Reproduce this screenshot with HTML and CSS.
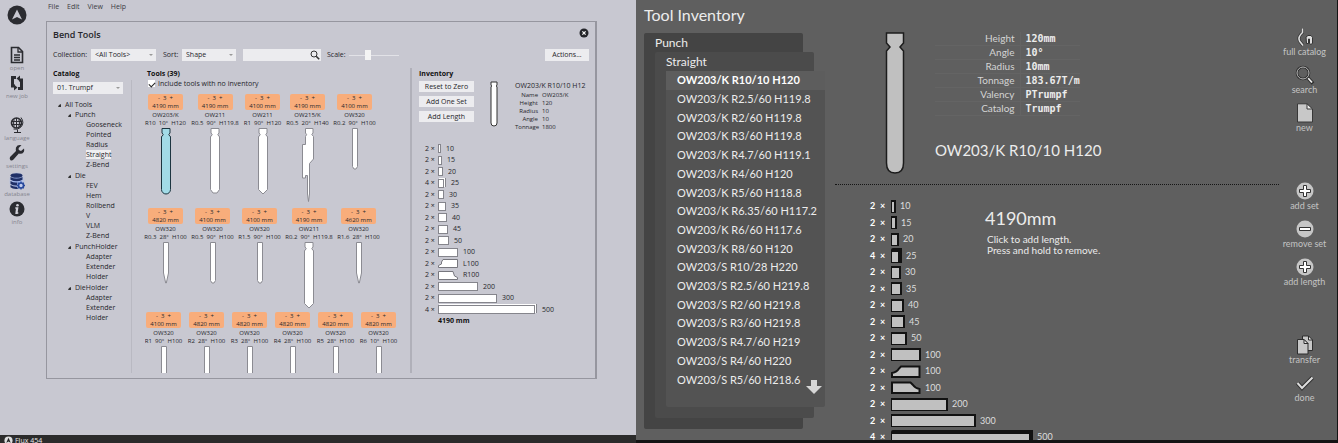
FILE: index.html
```html
<!DOCTYPE html>
<html lang="en">
<head>
<meta charset="utf-8">
<title>Bend Tools</title>
<link rel="stylesheet" href="styles.css">
</head>
<body>
<svg class="defs" aria-hidden="true">
  <symbol id="t-round" viewBox="0 0 10 67"><path d="M1 .5H9V5L7.8 6.5 9 8.5H9.5V61.5A4.5 4.5 0 0 1 .5 61.5V8.5H1L2.2 6.5 1 5Z"/></symbol>
  <symbol id="t-blunt" viewBox="0 0 10 67"><path d="M1 .5H9V5L7.8 6.5 9 8.5H9.5V61.5L7 65H3L.5 61.5V8.5H1L2.2 6.5 1 5Z"/></symbol>
  <symbol id="t-point" viewBox="0 0 10 67"><path d="M1 .5H9V5L7.8 6.5 9 8.5H9.5V61.5L5 66 .5 61.5V8.5H1L2.2 6.5 1 5Z"/></symbol>
  <symbol id="t-step" viewBox="0 0 12 74"><path d="M3.500 .5H11V5L9.800 6.500 11.500 8.500V31L7.500 35.500V66L6.500 73.500 5.500 66V47.500H3.500V50H.5V16.500H3.500V8.500L4.600 6.500 3.500 5Z"/></symbol>
  <symbol id="t-slim" viewBox="0 0 6 42"><path d="M.5 .5H5.500V38.500L4 41H2L.5 38.500Z"/></symbol>
  <symbol id="t-spike" viewBox="0 0 6 42"><path d="M.5 .5H5.500V31L3.300 41H2.700L.5 31Z"/></symbol>
  <symbol id="i-plus" viewBox="0 0 18 18"><circle cx="9" cy="9" r="8.500" fill="#c6c6c6"/><path d="M7.500 3.500h3v4h4v3h-4v4h-3v-4h-4v-3h4z" fill="#fff" stroke="#333"/></symbol>
</svg>
<div class="screens">
<section class="desk">
  <div class="desk-body">
    <nav class="side">
      <svg class="logo" viewBox="0 0 20 20"><circle cx="10" cy="10" r="9.500" fill="#2b2c31"/><path d="M10 4.500 15 14.500 10 12 5 14.500Z" fill="#c8c8d1"/></svg>
      <div class="side-group">
        <button class="side-btn"><svg viewBox="0 0 16 18"><path d="M2.500 1.500h7l4 4v11h-11z" fill="none" stroke="#2b2c31" stroke-width="1.600"/><path d="M9 1.500v4.500h4.500M5 9h6M5 11.500h6M5 14h6" fill="none" stroke="#2b2c31" stroke-width="1.300"/></svg>open</button>
        <button class="side-btn"><svg viewBox="0 0 16 18"><path d="M7 3.500H3.500V12H6" fill="none" stroke="#2b2c31" stroke-width="3"/><path d="M9 14.500H12.500V6H10" fill="none" stroke="#2b2c31" stroke-width="3"/><path d="M5 10.500 8.500 13.500 5 16.500ZM11 1.500 7.500 4.500 11 7.500Z" fill="#2b2c31"/></svg>new job</button>
      </div>
      <div class="side-group">
        <button class="side-btn"><svg viewBox="0 0 16 18"><circle cx="7.500" cy="7" r="5" fill="none" stroke="#2b2c31" stroke-width="1.600"/><path d="M3 5.500h9M3 8.500h9M7.500 2v10M5.200 3.500q-1.400 3.500 0 7M9.800 3.500q1.400 3.500 0 7M12 1.500q4 5.500-.5 10-3 2.500-7 1.500M8.500 13.500v3M5 16.500h7" fill="none" stroke="#2b2c31"/></svg>language</button>
        <button class="side-btn"><svg viewBox="0 0 16 18"><path d="M15 4.500 12 7 9.800 6 9.600 4 12.500 1.300Q8.500 .3 7 3.500 6.500 5.500 7 7L1 13Q.2 15 1.500 16.200 3 17 4.500 15.500L9.800 9.600Q13 10.500 14.800 8 15.600 6.300 15 4.500Z" fill="#2b2c31"/></svg>settings</button>
        <button class="side-btn current"><svg viewBox="0 0 16 18"><ellipse cx="7.500" cy="3.500" rx="6" ry="2.300"/><path d="M1.500 5q6 3 12 0v2.800q-6 3-12 0zM1.500 9q3.500 2 7 1.400L8 13.500q-4 .2-6.500-1.500zM1.500 13q3 2 6.500 1.700l1 2.200q-5 .6-7.500-1.600z"/><circle cx="12" cy="13.500" r="2.500" fill="#c0cbed" stroke="#28499c" stroke-width="1.600"/><path d="M12 9.500v1.500M12 16v1.500M8 13.500h1.500M14.500 13.500H16M9.200 10.700l1 1M13.800 15.300l1 1M9.200 16.300l1-1M13.800 11.700l1-1" stroke="#28499c" stroke-width="1.300"/></svg>database</button>
        <button class="side-btn"><svg viewBox="0 0 16 18"><circle cx="8" cy="9" r="7.500" fill="#2b2c31"/><circle cx="8.500" cy="5.200" r="1.300" fill="#d0d0d8"/><path d="M6.300 8h2.400l-.8 5h1.400M7.600 8.500 7 13.300h1.500" fill="none" stroke="#d0d0d8" stroke-width="1.300"/></svg>info</button>
      </div>
    </nav>
    <div class="work">
      <nav class="menu"><a href="#">File</a><a href="#">Edit</a><a href="#">View</a><a href="#">Help</a></nav>
      <main class="window">
        <header class="win-head"><h1>Bend Tools</h1>
          <button class="close" aria-label="Close"><svg viewBox="0 0 10 10"><circle cx="5" cy="5" r="4.500" fill="#25262b"/><path d="M3.400 3.400l3.200 3.200M6.600 3.400 3.400 6.600" stroke="#fff" stroke-width="1.200"/></svg></button></header>
        <div class="toolbar">
          <label for="coll" class="coll-label">Collection:</label><span class="pick pick-coll"><select id="coll"><option>&lt;All Tools&gt;</option></select></span>
          <label for="sort" class="sort-label">Sort:</label><span class="pick pick-sort"><select id="sort"><option>Shape</option></select></span>
          <span class="search"><input type="text" aria-label="Search tools"><svg viewBox="0 0 10 10"><circle cx="4" cy="4" r="3" fill="none" stroke="#333"/><path d="M6.200 6.200 9.200 9.200" stroke="#333" stroke-width="1.600"/></svg></span>
          <label for="scale">Scale:</label><input id="scale" class="scale" type="range" min="0" max="100" value="38">
          <button class="btn actions">Actions...</button>
        </div>
        <div class="cols">
          <section class="catalog">
            <h2>Catalog</h2>
            <div class="catalog-body">
            <span class="pick pick-cat"><select aria-label="Catalog"><option>01. Trumpf</option></select></span>
            <div class="tree">
              <p class="node top">All Tools</p>
              <div class="branch"><p class="node">Punch</p><p>Gooseneck</p><p>Pointed</p><p>Radius</p><p><mark>Straight</mark></p><p>Z-Bend</p></div>
              <div class="branch"><p class="node">Die</p><p>FEV</p><p>Hem</p><p>Rollbend</p><p>V</p><p>VLM</p><p>Z-Bend</p></div>
              <div class="branch"><p class="node">PunchHolder</p><p>Adapter</p><p>Extender</p><p>Holder</p></div>
              <div class="branch"><p class="node">DieHolder</p><p>Adapter</p><p>Extender</p><p>Holder</p></div>
            </div>
            </div>
          </section>
          <section class="tools">
            <h2>Tools (39)</h2>
            <label class="check"><input type="checkbox" checked>Include tools with no inventory</label>
            <div class="shelf">
              <article class="tool m"><div class="badge">- &nbsp;3 &nbsp;+<br>4190 mm</div><p>OW203/K<br>R10 &nbsp;10° &nbsp;H120</p><svg class="big picked"><use href="#t-round"/></svg></article>
              <article class="tool l"><div class="badge">- &nbsp;3 &nbsp;+<br>4190 mm</div><p>OW211<br>R0.5 &nbsp;90° &nbsp;H119.8</p><svg class="big"><use href="#t-blunt"/></svg></article>
              <article class="tool s"><div class="badge">- &nbsp;3 &nbsp;+<br>4100 mm</div><p>OW211<br>R1 &nbsp;90° &nbsp;H120</p><svg class="big"><use href="#t-point"/></svg></article>
              <article class="tool m"><div class="badge">- &nbsp;3 &nbsp;+<br>4190 mm</div><p>OW215/K<br>R0.5 &nbsp;20° &nbsp;H140</p><svg class="step"><use href="#t-step"/></svg></article>
              <article class="tool m"><div class="badge">- &nbsp;3 &nbsp;+<br>4100 mm</div><p>OW320<br>R0.2 &nbsp;90° &nbsp;H100</p><svg class="slim"><use href="#t-slim"/></svg></article>
            </div>
            <div class="shelf">
              <article class="tool m"><div class="badge">- &nbsp;3 &nbsp;+<br>4820 mm</div><p>OW320<br>R0.3 &nbsp;28° &nbsp;H100</p><svg class="slim"><use href="#t-spike"/></svg></article>
              <article class="tool m"><div class="badge">- &nbsp;3 &nbsp;+<br>4100 mm</div><p>OW320<br>R0.5 &nbsp;90° &nbsp;H100</p><svg class="slim"><use href="#t-slim"/></svg></article>
              <article class="tool m"><div class="badge">- &nbsp;3 &nbsp;+<br>4100 mm</div><p>OW320<br>R1.5 &nbsp;90° &nbsp;H100</p><svg class="slim"><use href="#t-slim"/></svg></article>
              <article class="tool l"><div class="badge">- &nbsp;3 &nbsp;+<br>4190 mm</div><p>OW211<br>R0.2 &nbsp;90° &nbsp;H119.8</p><svg class="big"><use href="#t-point"/></svg></article>
              <article class="tool m"><div class="badge">- &nbsp;3 &nbsp;+<br>4620 mm</div><p>OW320<br>R1.6 &nbsp;28° &nbsp;H100</p><svg class="slim"><use href="#t-spike"/></svg></article>
            </div>
            <div class="shelf last">
              <article class="tool s"><div class="badge">- &nbsp;3 &nbsp;+<br>4100 mm</div><p>OW320<br>R1 &nbsp;90° &nbsp;H100</p><svg class="slim"><use href="#t-slim"/></svg></article>
              <article class="tool s"><div class="badge">- &nbsp;3 &nbsp;+<br>4820 mm</div><p>OW320<br>R2 &nbsp;28° &nbsp;H100</p><svg class="slim"><use href="#t-slim"/></svg></article>
              <article class="tool s"><div class="badge">- &nbsp;3 &nbsp;+<br>4820 mm</div><p>OW320<br>R3 &nbsp;28° &nbsp;H100</p><svg class="slim"><use href="#t-slim"/></svg></article>
              <article class="tool s"><div class="badge">- &nbsp;3 &nbsp;+<br>4820 mm</div><p>OW320<br>R4 &nbsp;28° &nbsp;H100</p><svg class="slim"><use href="#t-slim"/></svg></article>
              <article class="tool s"><div class="badge">- &nbsp;3 &nbsp;+<br>4820 mm</div><p>OW320<br>R5 &nbsp;28° &nbsp;H100</p><svg class="slim"><use href="#t-slim"/></svg></article>
              <article class="tool s"><div class="badge">- &nbsp;3 &nbsp;+<br>4820 mm</div><p>OW320<br>R6 &nbsp;10° &nbsp;H100</p><svg class="slim"><use href="#t-slim"/></svg></article>
            </div>
          </section>
          <section class="inventory">
            <h2>Inventory</h2>
            <div class="inv-top">
              <div class="inv-btns"><button class="btn">Reset to Zero</button><button class="btn">Add One Set</button><button class="btn">Add Length</button></div>
              <svg class="inv-tool" viewBox="0 0 8 46"><path d="M1 1H7V4L6.300 5 7 6V42A3 3 0 0 1 1 42V6L1.700 5 1 4Z" fill="#fff" stroke="#333"/></svg>
              <div class="inv-info"><h3>OW203/K R10/10 H12</h3>
                <dl><dt>Name</dt><dd>OW203/K</dd><dt>Height</dt><dd>120</dd><dt>Radius</dt><dd>10</dd><dt>Angle</dt><dd>10</dd><dt>Tonnage</dt><dd>1800</dd></dl></div>
            </div>
            <ul class="stock">
              <li><span>2 ×</span><i style="width:3px"></i>10</li>
              <li><span>2 ×</span><i style="width:4px"></i>15</li>
              <li><span>2 ×</span><i style="width:5px"></i>20</li>
              <li><span>4 ×</span><i class="multi" style="width:6px"></i>25</li>
              <li><span>2 ×</span><i style="width:6px"></i>30</li>
              <li><span>2 ×</span><i style="width:8px"></i>35</li>
              <li><span>2 ×</span><i style="width:9px"></i>40</li>
              <li><span>2 ×</span><i style="width:10px"></i>45</li>
              <li><span>2 ×</span><i style="width:11px"></i>50</li>
              <li><span>2 ×</span><i style="width:20px"></i>100</li>
              <li><span>2 ×</span><svg viewBox="0 0 20 9"><path d="M.5 8.500V6.500L3.500 5V3L5 .5H19.500V8.500Z"/></svg>L100</li>
              <li><span>2 ×</span><svg viewBox="0 0 20 9"><path d="M.5 .5H15L16.500 5 19.500 6.500V8.500H.5Z"/></svg>R100</li>
              <li><span>2 ×</span><i style="width:40px"></i>200</li>
              <li><span>2 ×</span><i style="width:59px"></i>300</li>
              <li><span>4 ×</span><i class="multi" style="width:97px"></i>500</li>
            </ul>
            <strong class="total">4190 mm</strong>
          </section>
        </div>
      </main>
    </div>
  </div>
  <footer class="status"><svg viewBox="0 0 10 10"><circle cx="5" cy="5" r="4.500" fill="#ddd"/><path d="M5 2 7.500 7.500 5 6 2.500 7.500Z" fill="#222"/></svg><span>Flux 454</span></footer>
</section>

<section class="panel">
  <div class="browse">
    <h1>Tool Inventory</h1>
    <div class="card c1"><h2>Punch</h2>
      <div class="card c2"><h2>Straight</h2>
        <div class="card c3">
          <ul class="names">
            <li class="on">OW203/K R10/10 H120</li><li>OW203/K R2.5/60 H119.8</li><li>OW203/K R2/60 H119.8</li><li>OW203/K R3/60 H119.8</li><li>OW203/K R4.7/60 H119.1</li><li>OW203/K R4/60 H120</li><li>OW203/K R5/60 H118.8</li><li>OW203/K R6.35/60 H117.2</li><li>OW203/K R6/60 H117.6</li><li>OW203/K R8/60 H120</li><li>OW203/S R10/28 H220</li><li>OW203/S R2.5/60 H219.8</li><li>OW203/S R2/60 H219.8</li><li>OW203/S R3/60 H219.8</li><li>OW203/S R4.7/60 H219</li><li>OW203/S R4/60 H220</li><li>OW203/S R5/60 H218.6</li>
          </ul>
          <button class="more" aria-label="Scroll down"><svg viewBox="0 0 16 14"><path d="M5 0h6v6h5L8 14 0 6h5z" fill="#d6d6d6"/></svg></button>
        </div>
      </div>
    </div>
  </div>
  <div class="detail">
    <div class="spec">
      <svg class="profile" viewBox="0 0 20 142"><path d="M1.500 1H18.500V11L15 15 18.500 19V131Q18.500 141 10 141T1.500 131V19L5 15 1.500 11Z" fill="#c0c0c0" stroke="#1c1c1c" stroke-width="1.500"/></svg>
      <div>
        <table class="facts">
          <tr><th>Height</th><td>120mm</td></tr><tr><th>Angle</th><td>10°</td></tr><tr><th>Radius</th><td>10mm</td></tr><tr><th>Tonnage</th><td>183.67T/m</td></tr><tr><th>Valency</th><td>PTrumpf</td></tr><tr><th>Catalog</th><td>Trumpf</td></tr>
        </table>
        <h2>OW203/K R10/10 H120</h2>
      </div>
    </div>
    <div class="lengths">
      <ul class="bars">
        <li><b>2</b><b>×</b><i style="width:5px"></i>10</li>
        <li><b>2</b><b>×</b><i style="width:6px"></i>15</li>
        <li><b>2</b><b>×</b><i style="width:8px"></i>20</li>
        <li><b>4</b><b>×</b><i class="multi" style="width:11px"></i>25</li>
        <li><b>2</b><b>×</b><i style="width:10px"></i>30</li>
        <li><b>2</b><b>×</b><i style="width:11px"></i>35</li>
        <li><b>2</b><b>×</b><i style="width:13px"></i>40</li>
        <li><b>2</b><b>×</b><i style="width:14px"></i>45</li>
        <li><b>2</b><b>×</b><i style="width:16px"></i>50</li>
        <li><b>2</b><b>×</b><i style="width:30px"></i>100</li>
        <li><b>2</b><b>×</b><svg viewBox="0 0 30 13"><path d="M1 12V8Q6 7 8 3.500L10 1.500H28.500V12Z"/></svg>100</li>
        <li><b>2</b><b>×</b><svg viewBox="0 0 30 13"><path d="M1 12V1.500H19.500L22 4Q24 7 28.500 8V12Z"/></svg>100</li>
        <li><b>2</b><b>×</b><i style="width:57px"></i>200</li>
        <li><b>2</b><b>×</b><i style="width:85px"></i>300</li>
        <li><b>4</b><b>×</b><i class="multi" style="width:142px"></i>500</li>
      </ul>
      <div class="sum"><h2>4190mm</h2><p>Click to add length.<br>Press and hold to remove.</p></div>
    </div>
  </div>
  <aside class="rail">
    <div><button><svg viewBox="0 0 20 20"><path d="M7.500 1.500V5.500Q2.500 10 4.500 14L8 18.500" fill="none" stroke="#333" stroke-width="3"/><path d="M7.500 1.500V5.500Q2.500 10 4.500 14L8 18.500" fill="none" stroke="#ddd" stroke-width="1.600"/><path d="M11 10 13 8.500Q17 7.500 17.500 10.500V16.500L15.500 17.500 14.500 16V12H13.500V16.500H11.500Z" fill="#ddd" stroke="#333"/></svg>full catalog</button>
    <button><svg viewBox="0 0 20 20"><path d="M12 12 18 18.500" stroke="#2d2d2d" stroke-width="3.500"/><path d="M13 13 17 17.500" stroke="#eee" stroke-width="1.800"/><circle cx="8" cy="8" r="6" fill="none" stroke="#2d2d2d" stroke-width="2.600"/><circle cx="8" cy="8" r="6" fill="none" stroke="#bbb"/></svg>search</button>
    <button><svg viewBox="0 0 20 20"><path d="M2.500 .8H12L17.500 6V19H2.500Z" fill="#c8c8c8" stroke="#383838"/><path d="M12 .8V6H17.500Z" fill="#eee" stroke="#383838"/></svg>new</button></div>
    <div><button><svg viewBox="-1 -1 20 20"><use href="#i-plus" width="18" height="18"/></svg>add set</button>
    <button><svg viewBox="-1 -1 20 20"><circle cx="9" cy="9" r="8.500" fill="#c6c6c6"/><path d="M3.500 7.500h11v3h-11z" fill="#fff" stroke="#333"/></svg>remove set</button>
    <button><svg viewBox="-1 -1 20 20"><use href="#i-plus" width="18" height="18"/></svg>add length</button></div>
    <div><button><svg viewBox="0 0 20 20"><path d="M7.500 1H13.500L17.500 5V15.500H7.500Z" fill="#c8c8c8" stroke="#2d2d2d"/><path d="M2.500 4.500H9L13 8.500V19H2.500Z" fill="#c8c8c8" stroke="#2d2d2d"/><path d="M9 4.500V8.500H13ZM13.500 1V5H17.500Z" fill="#eee" stroke="#2d2d2d"/></svg>transfer</button>
    <button><svg viewBox="0 0 20 20"><path d="M2.500 10 7 15 17.500 4.500" fill="none" stroke="#303030" stroke-width="4"/><path d="M2.500 10 7 15 17.500 4.500" fill="none" stroke="#ddd" stroke-width="2"/></svg>done</button></div>
  </aside>
</section>
</div>
</body>
</html>
```
FILE: styles.css
```css
* { box-sizing: border-box; margin: 0; padding: 0; }
body { overflow: hidden; }
button, input, select { font: inherit; color: inherit; border: 0; background: none; }
ul { list-style: none; }
svg { display: block; flex: none; }
.defs { position: absolute; width: 0; height: 0; }

.screens { display: grid; grid-template-columns: 636fr 702fr; height: 100vh; }

/* desktop application */
.desk { display: flex; flex-direction: column; min-width: 0; min-height: 0; background: #c8c8d1; color: #26262b; font: 7px/10px "Open Sans", "Noto Sans", sans-serif; overflow: hidden; }
.desk-body { flex: 1; min-height: 0; display: flex; }
.side { width: 34px; display: flex; flex-direction: column; align-items: center; padding-top: 5px; }
.logo { width: 20px; height: 20px; margin-bottom: 21px; }
.side-group { display: flex; flex-direction: column; align-items: center; margin-bottom: 14px; }
.side-btn { width: 34px; height: 28px; display: flex; flex-direction: column; align-items: center; font-size: 6px; line-height: 8px; color: #85858f; white-space: nowrap; }
.side-btn svg { width: 16px; height: 18px; }
.side-btn.current svg { fill: #1f2f66; background: radial-gradient(#a5bbf0 30%, #c8c8d1 75%); }
.work { flex: 1; min-width: 0; display: flex; flex-direction: column; padding: 0 39px 56px 12px; }
.menu { height: 21px; display: flex; gap: 8px; padding: 2px 0 0 2px; }
.menu a { color: #3c3c42; text-decoration: none; }
.window { flex: 1; min-height: 0; display: flex; flex-direction: column; border: 1px solid #96969f; border-width: 1px 2px 1px 1px; padding: 6px 6px 5px 6px; }
.win-head { display: flex; justify-content: space-between; height: 21px; }
.win-head h1 { font-size: 9px; line-height: 14px; font-weight: 600; }
.close { width: 10px; height: 10px; }
.toolbar { display: flex; align-items: center; height: 12px; }
.pick { display: flex; position: relative; margin-left: 1px; }
.pick::after { content: ""; position: absolute; right: 3px; top: 5px; border: 2px solid transparent; border-top-color: #999; }
.pick select { appearance: none; width: 100%; height: 12px; padding-left: 4px; background: #ececef; }
.pick-coll { width: 65px; }
.pick-sort { width: 54px; }
.coll-label { width: 37px; }
.sort-label { width: 18px; margin-left: 7px; }
.search { display: flex; position: relative; margin: 0 6px 0 7px; }
.search input { width: 78px; height: 12px; padding: 0 12px 0 3px; background: #ececef; }
.search svg { position: absolute; right: 1px; top: 1px; width: 10px; height: 10px; }
.scale { appearance: none; width: 50px; height: 12px; margin-left: 3px; }
.scale::-webkit-slider-runnable-track { height: 1px; background: #e2e2e7; }
.scale::-webkit-slider-thumb { appearance: none; width: 6px; height: 10px; margin-top: -5px; background: #f4f4f4; }
.btn { height: 11px; line-height: 10px; background: #ececef; text-align: center; white-space: nowrap; }
.actions { width: 44px; height: 12px; margin-left: auto; }
.cols { flex: 1; min-height: 0; display: flex; padding-top: 7px; }
.cols h2 { font-size: 7px; line-height: 12px; font-weight: 700; color: #111; }

.catalog { width: 79px; display: flex; flex-direction: column; }
.catalog-body { flex: 1; border-right: 1px solid #b9b9c2; }
.catalog .pick-cat { width: 70px; margin: 2px 0 6px; }
.tree { padding-left: 5px; }
.tree p { padding-left: 28px; }
.tree .node { display: flex; align-items: center; gap: 4px; padding-left: 10px; }
.tree .node::before { content: ""; border: 2px solid transparent; border-right-color: #333; border-bottom-color: #333; border-width: 1px 2px 2px 1px; }
.tree .top { padding-left: 0; }
.branch { padding-bottom: 1px; }
.tree mark { background: #efeff1; color: inherit; }

.tools { flex: 1; min-width: 0; padding-left: 13px; display: flex; flex-direction: column; }
.tools h2 { padding-left: 2px; line-height: 11px; }
.check { display: flex; align-items: center; gap: 3px; height: 9px; padding-left: 3px; }
.check input { appearance: none; width: 7px; height: 7px; background: #fff; display: grid; place-items: center; }
.check input:checked::after { content: ""; width: 5px; height: 3px; border: solid #222; border-width: 0 0 1px 1px; rotate: -45deg; }
.shelf { display: flex; gap: 6px; margin-top: 6px; font-size: 6px; line-height: 8px; }
.shelf.last { flex: 1 1 0; min-height: 0; margin-top: 3px; overflow: hidden; }
.tool { display: flex; flex-direction: column; align-items: center; text-align: center; white-space: nowrap; }
.s { width: 37px; } .m { width: 41px; } .l { width: 46px; }
.tool p { margin: 1px 0; font-size: 6px; }
.badge { width: 35px; height: 16px; background: #f8ad7b; border-radius: 2px; }
.tool svg { fill: #fff; stroke: #8b8b92; stroke-width: 1px; }
.tool .picked { fill: #a2dbe7; stroke: #1c3540; }
.big { width: 10px; height: 67px; }
.step { width: 12px; height: 74px; }
.slim { width: 6px; height: 42px; }

.inventory { width: 179px; border-left: 2px solid #b0b0b9; padding-left: 7px; overflow: hidden; }
.inv-top { display: flex; padding-top: 1px; height: 63px; }
.inv-btns { display: flex; flex-direction: column; gap: 4px; width: 55px; }
.inv-tool { width: 8px; height: 46px; margin-left: 16px; }
.inv-info { margin-left: 17px; white-space: nowrap; }
.inv-btns, .inv-tool, .inv-info { flex: none; }
.inv-info h3 { font-size: 7px; line-height: 10px; font-weight: 400; }
.inv-info dl { display: grid; grid-template-columns: 23px auto; column-gap: 4px; font-size: 6px; line-height: 8px; }
.inv-info dt { text-align: right; }
.stock { display: grid; grid-auto-rows: 11px 12px; padding-left: 6px; }
.stock li { display: flex; align-items: center; }
.stock span { width: 13px; }
.stock i { height: 9px; background: #fff; border: 1px solid #85858c; margin-right: 5px; }
.stock .multi { box-shadow: 1px -1px #fff, 2px -1px #85858c; margin-right: 7px; }
.stock svg { width: 20px; height: 9px; margin-right: 5px; fill: #fff; stroke: #77777e; }
.total { display: block; padding: 1px 0 0 19px; color: #111; }
.status { height: 8px; display: flex; gap: 2px; padding: 1px 0 0 4px; background: #2b2b2b; color: #e8e8e8; overflow: hidden; }
.status svg { width: 9px; height: 9px; }

/* machine panel */
.panel { display: grid; grid-template-columns: 189px 1fr 58px; min-width: 0; min-height: 0; overflow: hidden; background: #5f5f5f; color: #ececec; border: solid #141414; border-width: 0 1px 3px 0; font: 11px/16px Lato, sans-serif; }
.panel h1, .panel h2 { font-weight: 400; }
.browse { display: flex; flex-direction: column; min-height: 0; padding: 0 11px 11px 8px; margin-right: 11px; }
.browse h1 { font-size: 16px; line-height: 30px; height: 33px; white-space: nowrap; }
.card { flex: 1; min-height: 0; display: flex; flex-direction: column; border-radius: 2px; }
.card h2 { font-size: 12px; line-height: 19px; }
.c1 { background: #444; padding: 0 0 11px 11px; }
.c2 { background: #4b4b4b; padding: 0 0 11px 11px; margin-right: -11px; }
.c3 { background: #535353; margin-right: -11px; padding-bottom: 18px; position: relative; }
.names { flex: 1; min-height: 0; display: flex; flex-direction: column; }
.names li { flex: 1; display: flex; align-items: center; padding-left: 11px; white-space: nowrap; }
.names .on { background: #5d5d5d; color: #fff; font-weight: 700; }
.more { position: absolute; right: 3px; bottom: 13px; width: 16px; height: 14px; }
.detail { display: flex; flex-direction: column; min-width: 0; min-height: 0; padding-left: 10px; }
.spec { display: flex; gap: 30px; padding: 32px 0 10px 50px; border-bottom: 1px dotted #151515; }
.profile { width: 20px; height: 142px; }
.facts { border-collapse: collapse; line-height: 13px; }
.facts th { width: 85px; padding-right: 5px; text-align: right; font-size: 10px; font-weight: 400; color: #d4d4d4; border-right: 1px solid #646464; }
.facts td { padding-left: 5px; font: 700 10px/13px "DejaVu Sans Mono", monospace; }
.facts tr { border-bottom: 1px solid #646464; }
.spec h2 { font-size: 15px; line-height: 20px; margin-top: 24px; }
.lengths { flex: 1; min-height: 0; display: grid; grid-template-columns: 1fr; padding: 13px 0 0 35px; overflow: hidden; }
.bars, .sum { grid-area: 1 / 1; }
.bars { display: grid; grid-auto-rows: 16px 17px; align-content: start; font-size: 9px; color: #ddd; }
.bars li { display: flex; align-items: center; }
.bars b { width: 10px; color: #fff; }
.bars i { height: 13px; background: #c0c0c0; border: solid #121212; border-width: 2px 2px 1px 1px; margin-right: 4px; }
.bars .multi { height: 15px; border-width: 4px 4px 1px 1px; border-top-left-radius: 2px; }
.bars b + i, .bars b + svg { margin-left: 1px; }
.bars svg { width: 30px; height: 13px; margin-right: 4px; fill: #c0c0c0; stroke: #121212; stroke-width: 2px; }
.sum { padding-left: 115px; padding-top: 9px; justify-self: start; }
.sum h2 { font-size: 18px; line-height: 22px; }
.sum p { font-size: 10px; line-height: 11px; padding: 5px 0 0 2px; }
.rail { display: flex; flex-direction: column; gap: 40px; padding: 27px 7px 0 0; align-items: center; }
.rail button { display: flex; flex-direction: column; align-items: center; width: 50px; height: 38px; font-size: 9px; line-height: 10px; color: #c4c4c4; white-space: nowrap; }
.rail svg { width: 20px; height: 20px; }
```
